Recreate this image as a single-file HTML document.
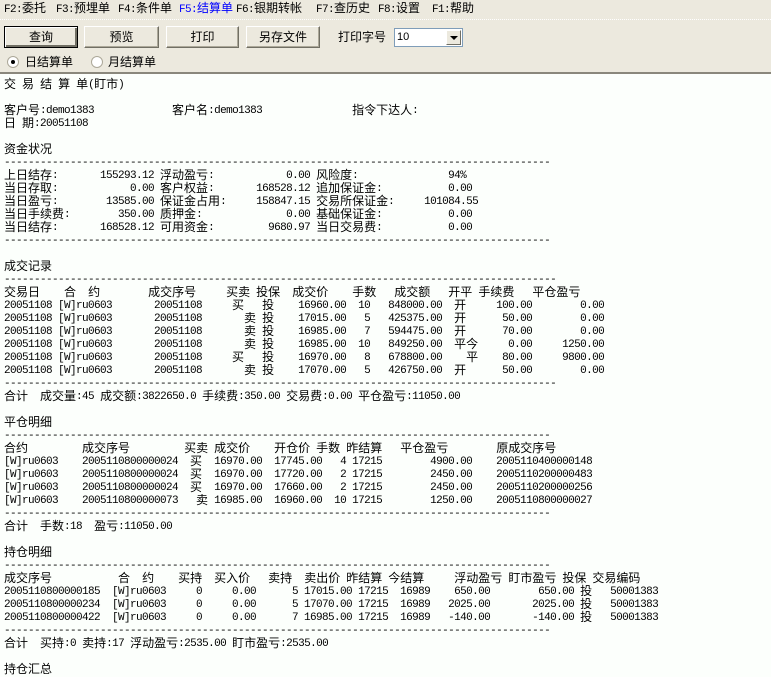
<!DOCTYPE html>
<html><head><meta charset="utf-8"><style>
*{margin:0;padding:0;box-sizing:border-box}
body{width:771px;height:674px;overflow:hidden;background:#fcfffc;position:relative;font-family:"Liberation Mono","Noto Sans CJK SC",monospace;color:#000}
#tb{position:absolute;left:0;top:0;width:771px;height:74px;background:#ece9de;border-bottom:2px solid #8a877c}
.m{position:absolute;top:1px;font-size:12px;line-height:14px;white-space:pre}
.m>span:first-child{font-size:11px;letter-spacing:-0.6px}
.c{font-family:"Noto Sans CJK SC","WenQuanYi Zen Hei",sans-serif;font-size:12px}
.btn{position:absolute;top:26px;height:22px;background:#ece9de;border:1px solid;border-color:#fff #716f64 #716f64 #fff;box-shadow:inset -1px -1px 0 #aca899;font-family:"Noto Sans CJK SC",sans-serif;font-size:12px;line-height:19px;text-align:center}
.btn.d{border:1px solid #000;box-shadow:inset 1px 1px 0 #fff,inset -2px -2px 0 #716f64}
.rad{position:absolute;top:56px;width:12px;height:12px;border-radius:50%;background:#fff;border:1px solid #aca899}
pre{position:absolute;left:4px;top:79px;font-family:"Liberation Mono",monospace;font-size:11px;letter-spacing:-0.6px;line-height:13px;white-space:pre}
pre b{display:inline-block;height:13px;vertical-align:top;position:relative;top:-2px;letter-spacing:0;font-weight:normal;font-family:"Noto Sans CJK SC","WenQuanYi Zen Hei",sans-serif;font-size:12px;line-height:13px}
</style></head><body>
<div id="tb">
<span class="m" style="left:4px"><span>F2:</span><span class="c">委托</span></span>
<span class="m" style="left:56px"><span>F3:</span><span class="c">预埋单</span></span>
<span class="m" style="left:118px"><span>F4:</span><span class="c">条件单</span></span>
<span class="m" style="left:179px;color:#0000ff"><span>F5:</span><span class="c">结算单</span></span>
<span class="m" style="left:236px"><span>F6:</span><span class="c">银期转帐</span></span>
<span class="m" style="left:316px"><span>F7:</span><span class="c">查历史</span></span>
<span class="m" style="left:378px"><span>F8:</span><span class="c">设置</span></span>
<span class="m" style="left:432px"><span>F1:</span><span class="c">帮助</span></span>
<div style="position:absolute;left:0;top:19px;width:771px;border-top:1px dotted #fff"></div>
<div class="btn d" style="left:4px;width:74px">查询</div>
<div class="btn" style="left:84px;width:75px">预览</div>
<div class="btn" style="left:166px;width:73px">打印</div>
<div class="btn" style="left:246px;width:74px">另存文件</div>
<span class="c" style="position:absolute;left:338px;top:29px;line-height:16px">打印字号</span>
<div style="position:absolute;left:394px;top:28px;width:69px;height:19px;background:#fff;border:1px solid #7f9db9;font-size:11px;line-height:17px;padding-left:2px;font-family:'Liberation Sans',sans-serif">10
<div style="position:absolute;right:1px;top:1px;width:15px;height:15px;background:#ece9de;border:1px solid;border-color:#fff #716f64 #716f64 #fff"><div style="position:absolute;left:3px;top:5px;border-left:4px solid transparent;border-right:4px solid transparent;border-top:4px solid #000"></div></div></div>
<div class="rad" style="left:7px"><div style="position:absolute;left:3px;top:3px;width:4px;height:4px;border-radius:50%;background:#000"></div></div>
<span class="c" style="position:absolute;left:25px;top:54px;line-height:16px">日结算单</span>
<div class="rad" style="left:91px"></div>
<span class="c" style="position:absolute;left:108px;top:54px;line-height:16px">月结算单</span>
</div>
<pre><b>交</b> <b>易</b> <b>结</b> <b>算</b> <b>单</b>(<b>盯市</b>)

<b>客户号</b>:demo1383             <b>客户名</b>:demo1383               <b>指令下达人</b>:
<b>日</b> <b>期</b>:20051108

<b>资金状况</b>
-------------------------------------------------------------------------------------------
<b>上日结存</b>:       155293.12 <b>浮动盈亏</b>:            0.00 <b>风险度</b>:               94%
<b>当日存取</b>:            0.00 <b>客户权益</b>:       168528.12 <b>追加保证金</b>:           0.00
<b>当日盈亏</b>:        13585.00 <b>保证金占用</b>:     158847.15 <b>交易所保证金</b>:     101084.55
<b>当日手续费</b>:        350.00 <b>质押金</b>:              0.00 <b>基础保证金</b>:           0.00
<b>当日结存</b>:       168528.12 <b>可用资金</b>:         9680.97 <b>当日交易费</b>:           0.00
-------------------------------------------------------------------------------------------

<b>成交记录</b>
--------------------------------------------------------------------------------------------
<b>交易日</b>    <b>合</b>  <b>约</b>        <b>成交序号</b>     <b>买卖</b> <b>投保</b>  <b>成交价</b>    <b>手数</b>   <b>成交额</b>   <b>开平</b> <b>手续费</b>   <b>平仓盈亏</b>
20051108 [W]ru0603       20051108     <b>买</b>   <b>投</b>    16960.00  10   848000.00  <b>开</b>     100.00        0.00
20051108 [W]ru0603       20051108       <b>卖</b> <b>投</b>    17015.00   5   425375.00  <b>开</b>      50.00        0.00
20051108 [W]ru0603       20051108       <b>卖</b> <b>投</b>    16985.00   7   594475.00  <b>开</b>      70.00        0.00
20051108 [W]ru0603       20051108       <b>卖</b> <b>投</b>    16985.00  10   849250.00  <b>平今</b>     0.00     1250.00
20051108 [W]ru0603       20051108     <b>买</b>   <b>投</b>    16970.00   8   678800.00    <b>平</b>    80.00     9800.00
20051108 [W]ru0603       20051108       <b>卖</b> <b>投</b>    17070.00   5   426750.00  <b>开</b>      50.00        0.00
--------------------------------------------------------------------------------------------
<b>合计</b>  <b>成交量</b>:45 <b>成交额</b>:3822650.0 <b>手续费</b>:350.00 <b>交易费</b>:0.00 <b>平仓盈亏</b>:11050.00

<b>平仓明细</b>
-------------------------------------------------------------------------------------------
<b>合约</b>         <b>成交序号</b>         <b>买卖</b> <b>成交价</b>    <b>开仓价</b> <b>手数</b> <b>昨结算</b>   <b>平仓盈亏</b>        <b>原成交序号</b>
[W]ru0603    2005110800000024  <b>买</b>  16970.00  17745.00   4 17215        4900.00    2005110400000148
[W]ru0603    2005110800000024  <b>买</b>  16970.00  17720.00   2 17215        2450.00    2005110200000483
[W]ru0603    2005110800000024  <b>买</b>  16970.00  17660.00   2 17215        2450.00    2005110200000256
[W]ru0603    2005110800000073   <b>卖</b> 16985.00  16960.00  10 17215        1250.00    2005110800000027
-------------------------------------------------------------------------------------------
<b>合计</b>  <b>手数</b>:18  <b>盈亏</b>:11050.00

<b>持仓明细</b>
-------------------------------------------------------------------------------------------
<b>成交序号</b>           <b>合</b>  <b>约</b>    <b>买持</b>  <b>买入价</b>   <b>卖持</b>  <b>卖出价</b> <b>昨结算</b> <b>今结算</b>     <b>浮动盈亏</b> <b>盯市盈亏</b> <b>投保</b> <b>交易编码</b>
2005110800000185  [W]ru0603     0     0.00      5 17015.00 17215  16989    650.00        650.00 <b>投</b>   50001383
2005110800000234  [W]ru0603     0     0.00      5 17070.00 17215  16989   2025.00       2025.00 <b>投</b>   50001383
2005110800000422  [W]ru0603     0     0.00      7 16985.00 17215  16989   -140.00       -140.00 <b>投</b>   50001383
-------------------------------------------------------------------------------------------
<b>合计</b>  <b>买持</b>:0 <b>卖持</b>:17 <b>浮动盈亏</b>:2535.00 <b>盯市盈亏</b>:2535.00

<b>持仓汇总</b></pre>
</body></html>
